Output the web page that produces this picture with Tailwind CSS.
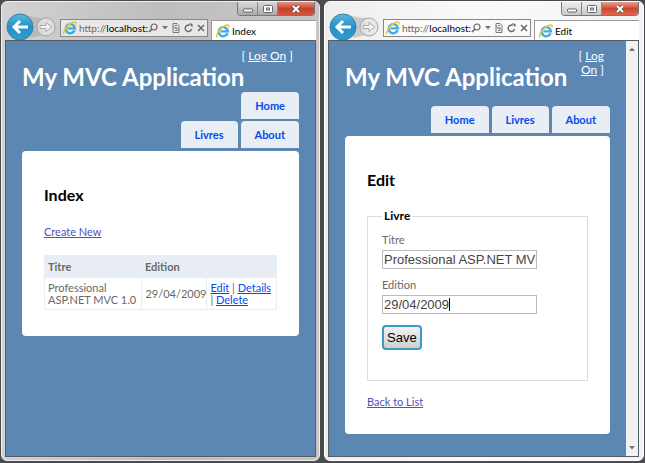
<!DOCTYPE html>
<html lang="fr">
<head>
<meta charset="utf-8">
<title>My MVC Application</title>
<script src="https://cdn.jsdelivr.net/npm/@tailwindcss/browser@4"></script>
</head>
<body class="bg-[#4a4b4f] font-['Lato','Liberation_Sans',sans-serif] text-[11px] leading-3 text-[#696969]">
<svg class="absolute h-0 w-0">
  <defs>
    <linearGradient id="blue" x1="0" y1="0" x2="0" y2="1"><stop offset="0" stop-color="#5bb8df"/><stop offset=".5" stop-color="#2391c8"/><stop offset="1" stop-color="#2c9fd2"/></linearGradient>
    <symbol id="nav" viewBox="0 0 52 27">
      <path d="M20 2Q30 5 37 5V22L24 25Z" fill="#a9a9a9" opacity=".55"/>
      <circle cx="14" cy="14" r="13" fill="url(#blue)" stroke="#3a7fa5"/>
      <path d="M22 14H8M14 8L8 14L14 20" fill="none" stroke="#fff" stroke-width="3"/>
      <circle cx="40" cy="14" r="9" fill="#e4e4e4" fill-opacity=".8" stroke="#a5a5a5"/>
      <path d="M34 12.500H40V9.500L45.500 14L40 18.500V15.500H34Z" fill="#f5f5f5" stroke="#aaa"/>
    </symbol>
    <symbol id="ie" viewBox="0 0 14 14">
      <path d="M11.600 9.300A4.600 4.600 0 1 1 11.900 7.400H4.500" fill="none" stroke="#3eaee3" stroke-width="2.400"/>
      <path d="M1.200 13.200C-.8 10.500 5 3.200 10 1.300C12.500 .4 13.400 1.500 12.800 3.500" fill="none" stroke="#f0c32d" stroke-width="1.500"/>
    </symbol>
    <symbol id="search" viewBox="0 0 10 10"><circle cx="6" cy="4" r="3" fill="none" stroke="#666" stroke-width="1.200"/><path d="M4 6L1 9" stroke="#666" stroke-width="1.700"/></symbol>
    <symbol id="drop" viewBox="0 0 6 4"><path d="M0 0H6L3 3.500Z" fill="#777"/></symbol>
    <symbol id="page" viewBox="0 0 8 10"><path d="M1 4V.5H5L7 2.500V4M1 6V9.500H7V6M0 5H8M3 2.500H5M3 7.500H5" fill="none" stroke="#777"/><path d="M1 3L7 8" stroke="#888"/></symbol>
    <symbol id="reload" viewBox="0 0 9 10"><path d="M7.500 6A3.200 3.200 0 1 1 6 2.500" fill="none" stroke="#666" stroke-width="1.400"/><path d="M5 0L8.500 1V4.500Z" fill="#666"/></symbol>
    <symbol id="stop" viewBox="0 0 8 8"><path d="M1 1L7 7M7 1L1 7" stroke="#666" stroke-width="1.500"/></symbol>
    <symbol id="min" viewBox="0 0 10 8"><rect x=".5" y="4" width="9" height="3" rx="1" fill="#fff" stroke="#666"/></symbol>
    <symbol id="max" viewBox="0 0 10 8"><rect x=".5" y=".5" width="9" height="7" rx="1" fill="#fff" stroke="#666"/><rect x="3.500" y="3" width="3" height="2" fill="#ddd" stroke="#666"/></symbol>
    <symbol id="close" viewBox="0 0 10 8"><path d="M2 1L8 7M8 1L2 7" stroke="#555" stroke-width="3.400"/><path d="M2 1L8 7M8 1L2 7" stroke="#fff" stroke-width="2"/></symbol>
  </defs>
</svg>
<div class="grid min-h-screen grid-cols-[319fr_320fr] gap-1 px-px pt-px pb-0.5">

  <section class="relative flex min-w-0 flex-col rounded-md border border-[#eee] bg-linear-to-r from-[#d2d2d2] via-[#bebebe] to-[#c9c5c5] px-[3px] pb-[3px]">
    <div class="absolute top-0 right-1 flex h-3.5 overflow-hidden rounded-b border border-t-0 border-[#777]">
      <button aria-label="Réduire" class="grid w-5 place-items-center border-r border-[#888] bg-linear-to-b from-[#d8d8d8] to-[#aaa]"><svg class="h-2 w-2.5"><use href="#min"/></svg></button>
      <button aria-label="Agrandir" class="grid w-5 place-items-center border-r border-[#888] bg-linear-to-b from-[#d8d8d8] to-[#aaa]"><svg class="h-2 w-2.5"><use href="#max"/></svg></button>
      <button aria-label="Fermer" class="grid w-9 place-items-center bg-linear-to-b from-[#e39384] via-[#c8402b] to-[#d4563c]"><svg class="h-2 w-2.5"><use href="#close"/></svg></button>
    </div>
    <div class="flex h-[38px] items-end pl-px">
      <svg class="h-[27px] w-[52px] shrink-0"><use href="#nav"/></svg>
      <div class="mr-[3px] mb-[3px] ml-0.5 flex h-[18px] min-w-0 flex-1 items-center border border-[#888] bg-[#e8e8e8] pr-1 pl-0.5 text-[10px]">
        <svg class="h-3.5 w-3.5 shrink-0"><use href="#ie"/></svg>
        <span class="ml-0.5 flex-1 whitespace-nowrap">http://<span class="text-black">localhost:</span></span>
        <svg class="mr-1 h-2.5 w-2.5 shrink-0"><use href="#search"/></svg>
        <svg class="h-1 w-1.5 shrink-0"><use href="#drop"/></svg>
        <svg class="ml-1 h-2.5 w-2 shrink-0"><use href="#page"/></svg>
        <svg class="mx-1 h-2.5 w-[9px] shrink-0"><use href="#reload"/></svg>
        <svg class="h-2 w-2 shrink-0"><use href="#stop"/></svg>
      </div>
      <div class="flex h-5 w-[105px] shrink-0 items-center gap-0.5 border-t border-l border-[#999] bg-white pl-1 text-[10px] text-black"><svg class="h-3.5 w-3.5"><use href="#ie"/></svg>Index</div>
    </div>
    <div class="flex flex-1 border border-[#555e68] bg-[#5c87b2]">
      <div class="min-w-0 flex-1 px-4">
        <header class="relative h-[51px] pt-[22px] text-white">
          <h1 class="text-[24px] leading-7 font-bold whitespace-nowrap">My MVC Application</h1>
          <div class="absolute top-2 right-1.5 text-right text-xs leading-[14px]">[ <a href="#" class="underline">Log On</a> ]</div>
        </header>
        <nav class="flex flex-wrap justify-end gap-x-[3px] gap-y-px pb-[3px] pl-24 font-bold text-[#034af3]">
          <a href="#" class="rounded-t bg-[#e8eef4] px-3.5 py-[7px] leading-[13px]">Home</a>
          <span class="h-0 w-full"></span>
          <a href="#" class="rounded-t bg-[#e8eef4] px-3.5 py-[7px] leading-[13px]">Livres</a>
          <a href="#" class="rounded-t bg-[#e8eef4] px-3.5 py-[7px] leading-[13px]">About</a>
        </nav>
        <main class="rounded bg-white px-[22px] pt-9 pb-[26px]">
          <h2 class="text-base leading-4 font-bold text-black">Index</h2>
          <p class="mt-[23px] mb-[17px]"><a href="#" class="text-[#5050b8] underline">Create New</a></p>
          <table class="w-full table-fixed border-collapse border border-[#e8eef4]">
            <thead class="bg-[#e8eef4] text-left"><tr class="h-[22px]"><th class="w-[42%] px-[3px]">Titre</th><th class="w-[28%] px-[3px]">Edition</th><th></th></tr></thead>
            <tbody><tr class="h-8"><td class="border border-[#e8eef4] px-[3px]">Professional<br>ASP.NET MVC 1.0</td><td class="border border-[#e8eef4] px-[3px]">29/04/2009</td><td class="border border-[#e8eef4] px-[3px] whitespace-nowrap"><a href="#" class="text-[#034af3] underline">Edit</a> | <a href="#" class="text-[#034af3] underline">Details</a><br>| <a href="#" class="text-[#034af3] underline">Delete</a></td></tr></tbody>
          </table>
        </main>
      </div>
    </div>
  </section>

  <section class="relative flex min-w-0 flex-col rounded-md border border-white bg-linear-to-r from-[#eee] via-[#fafafa] to-[#f3f3f3] pr-1 pb-[3px] pl-[3px]">
    <div class="absolute top-0 right-1 flex h-3.5 overflow-hidden rounded-b border border-t-0 border-[#777]">
      <button aria-label="Réduire" class="grid w-5 place-items-center border-r border-[#888] bg-linear-to-b from-[#eee] to-[#c5c7ca]"><svg class="h-2 w-2.5"><use href="#min"/></svg></button>
      <button aria-label="Agrandir" class="grid w-5 place-items-center border-r border-[#888] bg-linear-to-b from-[#eee] to-[#c5c7ca]"><svg class="h-2 w-2.5"><use href="#max"/></svg></button>
      <button aria-label="Fermer" class="grid w-9 place-items-center bg-linear-to-b from-[#e9a292] via-[#cd4631] to-[#df654b]"><svg class="h-2 w-2.5"><use href="#close"/></svg></button>
    </div>
    <div class="flex h-[38px] items-end pl-px">
      <svg class="h-[27px] w-[52px] shrink-0"><use href="#nav"/></svg>
      <div class="mr-[3px] mb-[3px] ml-0.5 flex h-[18px] min-w-0 flex-1 items-center border border-[#888] bg-[#fafafa] pr-1 pl-0.5 text-[10px]">
        <svg class="h-3.5 w-3.5 shrink-0"><use href="#ie"/></svg>
        <span class="ml-0.5 flex-1 whitespace-nowrap">http://<span class="text-black">localhost:</span></span>
        <svg class="mr-1 h-2.5 w-2.5 shrink-0"><use href="#search"/></svg>
        <svg class="h-1 w-1.5 shrink-0"><use href="#drop"/></svg>
        <svg class="ml-1 h-2.5 w-2 shrink-0"><use href="#page"/></svg>
        <svg class="mx-1 h-2.5 w-[9px] shrink-0"><use href="#reload"/></svg>
        <svg class="h-2 w-2 shrink-0"><use href="#stop"/></svg>
      </div>
      <div class="flex h-5 w-[105px] shrink-0 items-center gap-0.5 border-t border-l border-[#999] bg-white pl-1 text-[10px] text-black"><svg class="h-3.5 w-3.5"><use href="#ie"/></svg>Edit</div>
    </div>
    <div class="flex flex-1 border border-[#555e68] bg-[#5c87b2]">
      <div class="min-w-0 flex-1 px-4">
        <header class="relative h-[65px] pt-[22px] text-white">
          <h1 class="text-[24px] leading-7 font-bold whitespace-nowrap">My MVC Application</h1>
          <div class="absolute top-2 right-1.5 text-right text-xs leading-[14px]">[ <a href="#" class="underline">Log<br>On</a> ]</div>
        </header>
        <nav class="flex justify-end gap-[3px] pb-[3px] font-bold text-[#034af3]">
          <a href="#" class="rounded-t bg-[#e8eef4] px-3.5 py-[7px] leading-[13px]">Home</a>
          <a href="#" class="rounded-t bg-[#e8eef4] px-3.5 py-[7px] leading-[13px]">Livres</a>
          <a href="#" class="rounded-t bg-[#e8eef4] px-3.5 py-[7px] leading-[13px]">About</a>
        </nav>
        <main class="rounded bg-white px-[22px] pt-9 pb-[26px]">
          <h2 class="text-base leading-4 font-bold text-black">Edit</h2>
          <form class="mt-[22px]">
            <fieldset class="border border-[#ddd] px-3.5 pt-3 pb-[30px]">
              <legend class="px-0.5 text-xs leading-3 font-bold text-black">Livre</legend>
              <label for="titre" class="block">Titre</label>
              <input id="titre" value="Professional ASP.NET MVC" class="mt-1 block h-[19px] w-[155px] border border-[#bbb] pl-px font-['Liberation_Sans',sans-serif] text-[13px] text-[#444]">
              <label for="edition" class="mt-2.5 block">Edition</label>
              <div class="relative mt-1 w-[155px]">
                <input id="edition" value="29/04/2009" class="block h-[19px] w-full border border-[#bbb] pl-px font-['Liberation_Sans',sans-serif] text-[13px] text-[#444]">
                <span class="absolute top-[3px] left-[67px] h-[13px] w-px bg-black"></span>
              </div>
              <button type="button" class="mt-[11px] block h-[25px] rounded-sm border-2 border-[#3c9bc6] bg-linear-to-b from-[#f2f2f2] to-[#cfcfcf] px-[3px] font-['Liberation_Sans',sans-serif] text-[13px] text-black">Save</button>
            </fieldset>
          </form>
          <p class="mt-[15px]"><a href="#" class="text-[#5050b8] underline">Back to List</a></p>
        </main>
      </div>
      <div class="flex w-3 shrink-0 flex-col items-center justify-between bg-[#f1f1f1] py-1.5" aria-hidden="true">
        <svg class="h-1 w-1.5 rotate-180"><use href="#drop"/></svg>
        <svg class="h-1 w-1.5"><use href="#drop"/></svg>
      </div>
    </div>
  </section>
</div>
</body>
</html>
